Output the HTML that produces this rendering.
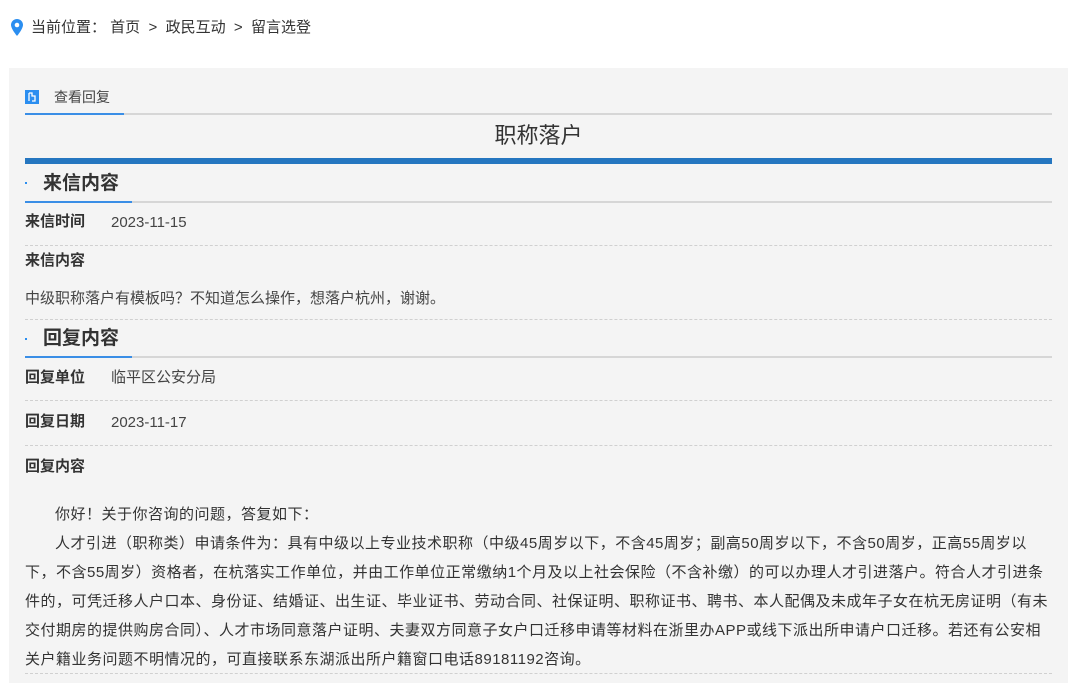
<!DOCTYPE html>
<html><head><meta charset="utf-8"><style>
*{margin:0;padding:0;box-sizing:border-box}
body{width:1080px;height:695px;background:#fff;font-family:"Liberation Sans","Noto Sans CJK SC",sans-serif;color:#333;position:relative;overflow:hidden}
.a{position:absolute;white-space:nowrap;line-height:20px}
.panel{position:absolute;left:9px;top:68px;width:1059px;height:615px;background:#f4f4f4}
.gl{position:absolute;left:25px;width:1027px;height:2px;background:#d6d6d6}
.bl{position:absolute;left:25px;height:2px;background:#3a8ee6}
.dl{position:absolute;left:25px;width:1027px;border-top:1px dashed #d0d0d0}
.lab{font-size:15px;font-weight:bold;color:#333}
.val{font-size:15px;color:#444}
.h{font-size:19px;font-weight:bold;color:#333}
.p{position:absolute;left:25px;width:1045px;font-size:15px;line-height:29px;color:#333;white-space:nowrap;letter-spacing:0.5px}
</style></head><body>
<svg class="a" style="left:11px;top:19px" width="12" height="17" viewBox="0 0 12 17"><path d="M6 0C2.7 0 0 2.6 0 5.9 0 10 6 17 6 17s6-7 6-11.1C12 2.6 9.3 0 6 0z" fill="#2b8ef0"/><circle cx="6" cy="6" r="2.3" fill="#fff"/></svg>
<div class="a" style="left:31px;top:18px;font-size:15px;color:#333">当前位置：&nbsp;首页 &nbsp;&gt;&nbsp; 政民互动 &nbsp;&gt;&nbsp; 留言选登</div>
<div class="panel"></div>
<div class="a" style="left:25px;top:90px;width:14px;height:14px;background:#2b8ef0"></div>
<svg class="a" style="left:25px;top:90px" width="14" height="14"><path d="M4 3v8M4 3h3v3h3v5H7" stroke="#fff" stroke-width="1.3" fill="none"/></svg>
<div class="a" style="left:54px;top:87px;font-size:14px;color:#444">查看回复</div>
<div class="gl" style="top:113px"></div><div class="bl" style="top:113px;width:99px"></div>
<div class="a" style="left:25px;width:1027px;top:126px;text-align:center;font-size:22px;color:#333">职称落户</div>
<div class="a" style="left:25px;top:158px;width:1027px;height:6px;background:#2576c0"></div>
<div class="a" style="left:25px;top:182px;width:2px;height:2px;background:#2b8ef0"></div>
<div class="a h" style="left:43px;top:174px">来信内容</div>
<div class="gl" style="top:201px"></div><div class="bl" style="top:201px;width:107px"></div>
<div class="a lab" style="left:25px;top:212px">来信时间</div><div class="a val" style="left:111px;top:213px">2023-11-15</div>
<div class="dl" style="top:245px"></div>
<div class="a lab" style="left:25px;top:251px">来信内容</div>
<div class="a val" style="left:25px;top:289px">中级职称落户有模板吗？不知道怎么操作，想落户杭州，谢谢。</div>
<div class="dl" style="top:319px"></div>
<div class="a" style="left:25px;top:338px;width:2px;height:2px;background:#2b8ef0"></div>
<div class="a h" style="left:43px;top:329px">回复内容</div>
<div class="gl" style="top:356px"></div><div class="bl" style="top:356px;width:107px"></div>
<div class="a lab" style="left:25px;top:368px">回复单位</div><div class="a val" style="left:111px;top:368px">临平区公安分局</div>
<div class="dl" style="top:400px"></div>
<div class="a lab" style="left:25px;top:412px">回复日期</div><div class="a val" style="left:111px;top:413px">2023-11-17</div>
<div class="dl" style="top:445px"></div>
<div class="a lab" style="left:25px;top:457px">回复内容</div>
<div class="p" style="top:500px">
<div style="padding-left:30px">你好！关于你咨询的问题，答复如下：</div>
<div style="padding-left:30px">人才引进（职称类）申请条件为：具有中级以上专业技术职称（中级45周岁以下，不含45周岁；副高50周岁以下，不含50周岁，正高55周岁以</div>
<div>下，不含55周岁）资格者，在杭落实工作单位，并由工作单位正常缴纳1个月及以上社会保险（不含补缴）的可以办理人才引进落户。符合人才引进条</div>
<div>件的，可凭迁移人户口本、身份证、结婚证、出生证、毕业证书、劳动合同、社保证明、职称证书、聘书、本人配偶及未成年子女在杭无房证明（有未</div>
<div>交付期房的提供购房合同）、人才市场同意落户证明、夫妻双方同意子女户口迁移申请等材料在浙里办APP或线下派出所申请户口迁移。若还有公安相</div>
<div>关户籍业务问题不明情况的，可直接联系东湖派出所户籍窗口电话89181192咨询。</div>
</div>
<div class="dl" style="top:673px"></div>
</body></html>
